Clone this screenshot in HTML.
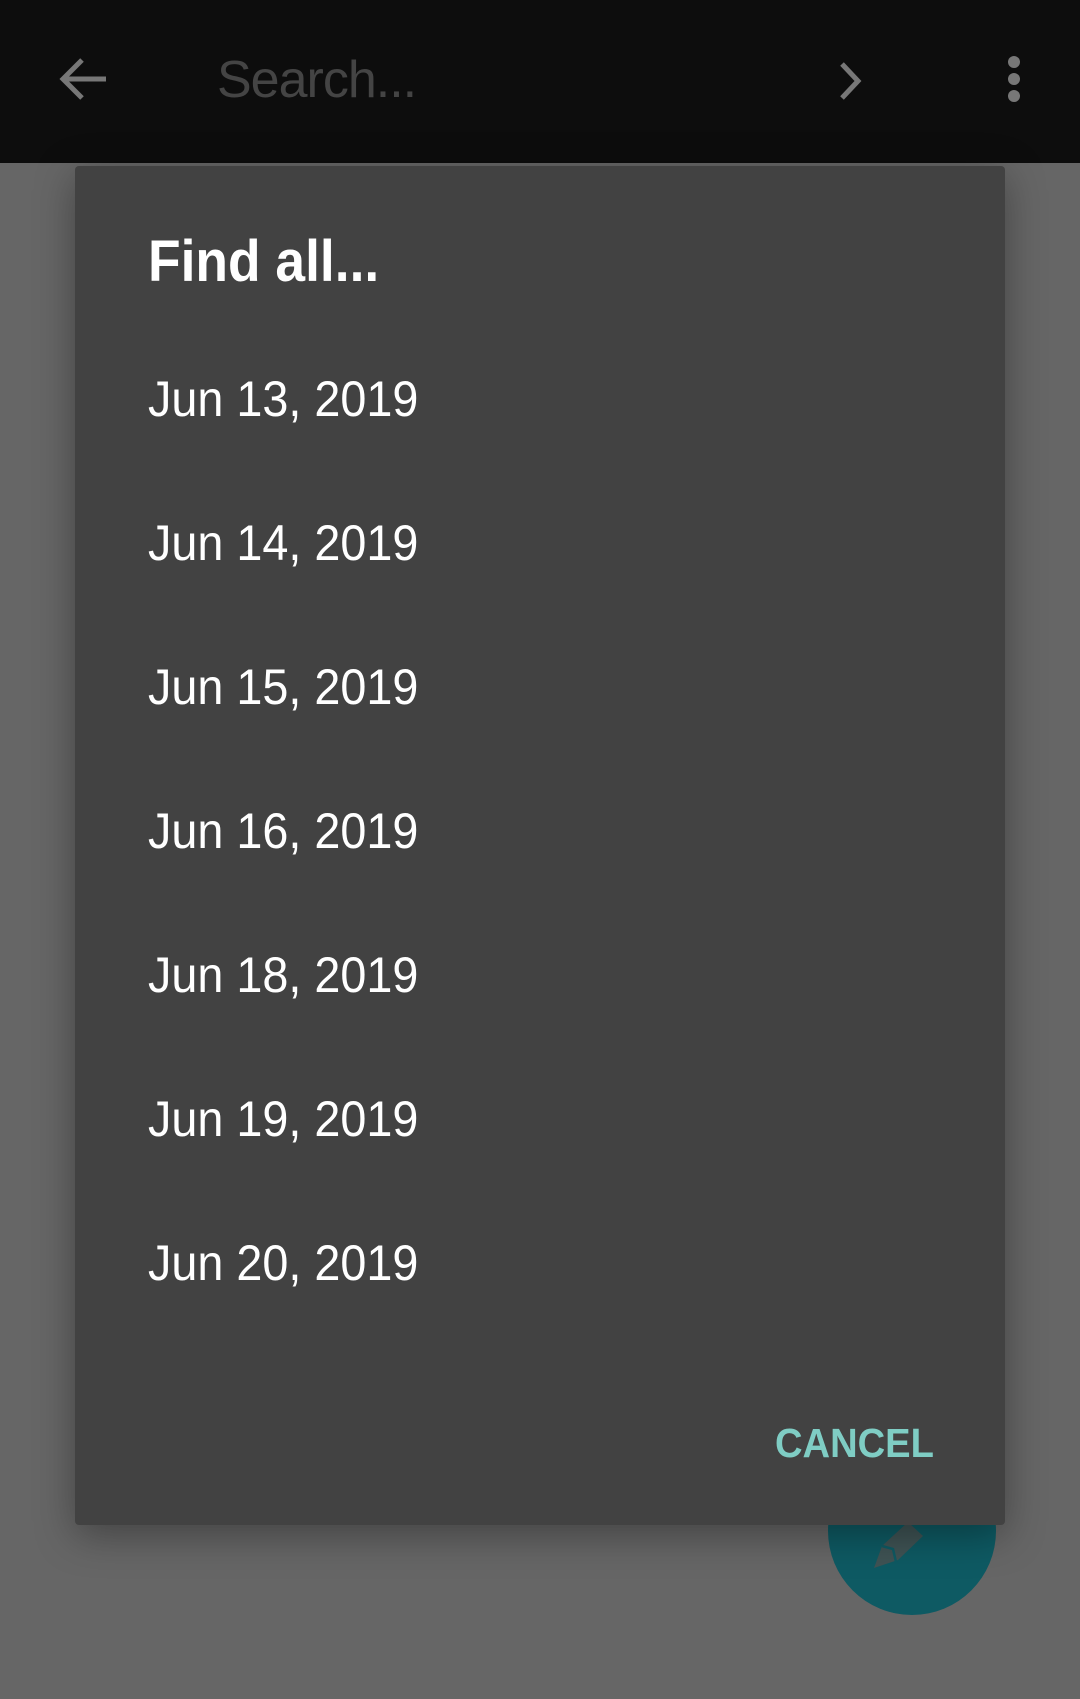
<!DOCTYPE html>
<html><head><meta charset="utf-8"><style>
*{margin:0;padding:0;box-sizing:border-box}
body{width:1080px;height:1699px;background:#666;position:relative;overflow:hidden;font-family:"Liberation Sans",Roboto,sans-serif}
.top{position:absolute;left:0;top:0;width:1080px;height:163px;background:#0d0d0d}
.search{position:absolute;left:217px;top:50px;font-size:52px;color:#444;letter-spacing:-1px}
.fab{position:absolute;left:828px;top:1447px;width:168px;height:168px;border-radius:50%;background:#0e5a63}
.dlg{position:absolute;left:75px;top:166px;width:930px;height:1359px;background:#424242;border-radius:4px;box-shadow:0 10px 40px rgba(0,0,0,.35)}
.title{position:absolute;left:73px;top:62px;font-size:58px;font-weight:bold;color:#fff;transform:scaleX(0.92);transform-origin:left}
.item{position:absolute;left:73px;font-size:50px;color:#fff;transform:scaleX(0.935);transform-origin:left}
.cancel{position:absolute;left:700px;top:1254px;font-size:41px;color:#7fcdc4;transform:scaleX(0.93);transform-origin:left;font-weight:bold;-webkit-text-stroke:0}
</style></head><body>
<div class="top">
<svg style="position:absolute;left:56px;top:54px" width="56" height="50" viewBox="0 0 56 50"><path d="M50 25H8M26 6L7 25L26 44" stroke="#777" stroke-width="5" fill="none"/></svg>
<div class="search">Search...</div>
<svg style="position:absolute;left:836px;top:60px" width="30" height="42" viewBox="0 0 30 42"><path d="M6 4L22 21L6 38" stroke="#777" stroke-width="5" fill="none"/></svg>
<svg style="position:absolute;left:1002px;top:54px" width="24" height="50"><circle cx="12" cy="8" r="6" fill="#777"/><circle cx="12" cy="25" r="6" fill="#777"/><circle cx="12" cy="42" r="6" fill="#777"/></svg>
</div>
<div class="fab"><svg style="position:absolute;left:40px;top:65px" width="90" height="80" viewBox="0 0 90 80"><path d="M6 56L14 34L40 10L55 24L30 48Z" fill="#3f5354"/><path d="M14 34L25 37L28 50" stroke="#0e5a63" stroke-width="2.5" fill="none"/></svg></div>
<div class="dlg">
<div class="title">Find all...</div>
<div class="item" style="top:204px">Jun 13, 2019</div>
<div class="item" style="top:348px">Jun 14, 2019</div>
<div class="item" style="top:492px">Jun 15, 2019</div>
<div class="item" style="top:636px">Jun 16, 2019</div>
<div class="item" style="top:780px">Jun 18, 2019</div>
<div class="item" style="top:924px">Jun 19, 2019</div>
<div class="item" style="top:1068px">Jun 20, 2019</div>
<div class="cancel">CANCEL</div>
</div>
</body></html>
